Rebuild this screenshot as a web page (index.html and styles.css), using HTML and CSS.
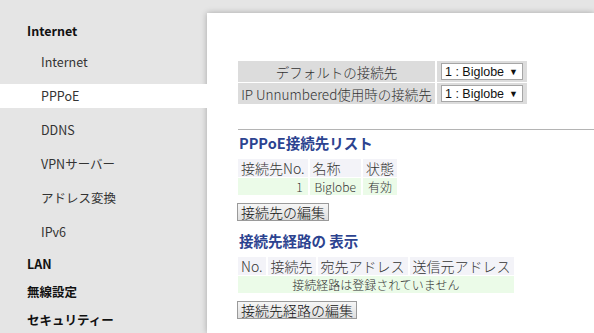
FILE: index.html
```html
<!DOCTYPE html>
<html lang="ja">
<head>
    <meta charset="UTF-8">
    <meta name="viewport" content="width=device-width, initial-scale=1.0">
    <title>PPPoE</title>
    <link rel="stylesheet" href="styles.css">
</head>
<body>
    <div class="page">
        <ul class="menu">
            <li class="group">Internet</li>
            <li class="item">Internet</li>
            <li class="item active">PPPoE</li>
            <li class="item">DDNS</li>
            <li class="item">VPNサーバー</li>
            <li class="item">アドレス変換</li>
            <li class="item last">IPv6</li>
            <li class="group">LAN</li>
            <li class="group">無線設定</li>
            <li class="group">セキュリティー</li>
        </ul>

        <div class="panel">
            <table class="setting">
                <tr>
                    <td class="label">デフォルトの接続先</td>
                    <td class="value"><span class="select">1 : Biglobe<span class="arrow">▼</span></span></td>
                </tr>
                <tr>
                    <td class="label">IP Unnumbered使用時の接続先</td>
                    <td class="value"><span class="select">1 : Biglobe<span class="arrow">▼</span></span></td>
                </tr>
            </table>

            <div class="rule"></div>

            <h3 class="title">PPPoE接続先リスト</h3>
            <table class="list">
                <tr class="head">
                    <td>接続先No.</td>
                    <td>名称</td>
                    <td>状態</td>
                </tr>
                <tr class="row">
                    <td class="num">1</td>
                    <td class="center">Biglobe</td>
                    <td>有効</td>
                </tr>
            </table>
            <button class="btn">接続先の編集</button>

            <h3 class="title second">接続先経路の 表示</h3>
            <table class="list">
                <tr class="head">
                    <td>No.</td>
                    <td>接続先</td>
                    <td>宛先アドレス</td>
                    <td>送信元アドレス</td>
                </tr>
                <tr class="row">
                    <td class="center" colspan="4">接続経路は登録されていません</td>
                </tr>
            </table>
            <button class="btn">接続先経路の編集</button>
        </div>
    </div>
</body>
</html>
```

FILE: styles.css
```css
*{padding: 0; margin: 0; box-sizing: border-box;}
ul, li {list-style: none;}
body {background: #e5e5e5; font-family: "Noto Sans CJK JP", "Noto Sans", sans-serif; color: #222; overflow: hidden;}
.page {display: flex; height: 333px;}

/* left menu */
.menu {width: 207px; flex-shrink: 0; padding-top: 21px; position: relative; z-index: 1;}
.menu li {font-size: 12.5px; white-space: nowrap;}
.menu .group {height: 20px; line-height: 20px; padding-left: 27px; font-weight: bold; margin-bottom: 8px; color: #111;}
.menu .group:first-child {margin-bottom: 9px;}
.menu .item {height: 24px; line-height: 24px; padding-left: 41px; margin-bottom: 10px; color: #333;}
.menu .item.active {background: #fff;}

/* right panel */
.panel {flex: 1; margin-top: 13px; background: #fff; padding: 47px 0 0 29px; box-shadow: 0 0 6px rgba(0,0,0,0.28); color: #333; font-weight: 300;}

.setting {border-collapse: separate; border-spacing: 2px 1px; font-size: 13.5px;}
.setting td {background: #dcdcdc; height: 21px; padding: 0 3px; white-space: nowrap;}
.setting .label {text-align: center; width: 197px;}
.setting .value {width: 90px; padding: 0 4px;}
.select {display: flex; align-items: center; justify-content: space-between; width: 82px; height: 17px; border: 1px solid #a6a6a6; background: #fff; font-family: "Liberation Sans", sans-serif; font-weight: normal; font-size: 12.5px; color: #111; padding: 0 4px 0 3px;}
.select .arrow {font-size: 9px;}

.rule {border-top: 1px solid #b4b4b4; margin: 24px 0 0 2px;}

.title {font-size: 14.5px; line-height: 20px; height: 20px; margin: 3px 0 5px 3px; color: #2c4390; font-weight: bold;}
.title.second {margin-top: 10px;}

.list {border-collapse: separate; border-spacing: 2px 1px; white-space: nowrap;}
.list .head td {background: #f3f3f8; height: 18px; font-size: 14px; padding: 0 3px; line-height: 18px;}
.list .row td {background: #ebfbe8; height: 17px; font-size: 12px; padding: 0 5px; line-height: 17px;}
.list .num {text-align: right;}
.list .center {text-align: center;}

.btn {display: block; margin: 8px 0 0 1px; height: 18px; padding: 0 3px; font-family: "Noto Sans CJK JP", sans-serif; font-weight: 300; font-size: 14px; line-height: 16px; color: #111; border: 1px solid #9a9a9a; background: linear-gradient(#f6f6f6, #dedede);}
.list + .btn {margin-top: 7px;}
```
